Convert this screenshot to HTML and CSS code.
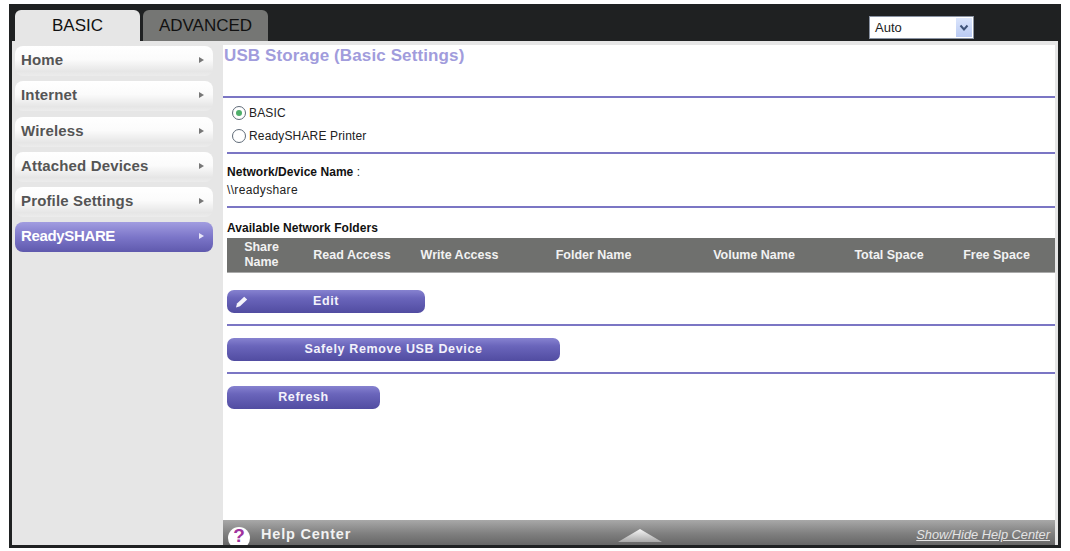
FILE: index.html
```html
<!DOCTYPE html>
<html lang="en">
<head>
<meta charset="utf-8">
<title>USB Storage (Basic Settings)</title>
<link rel="stylesheet" href="styles.css">
</head>
<body>
<div class="frame">
  <header class="top">
    <div class="tab tab-on">BASIC</div>
    <div class="tab tab-off">ADVANCED</div>
    <div class="select"><span class="select-text">Auto</span><span class="select-btn"><svg width="10" height="8" viewBox="0 0 10 8"><path d="M1.5 1.5 5 5.5l3.5-4" fill="none" stroke="#3f5378" stroke-width="2"/></svg></span></div>
  </header>
  <div class="panel">
    <nav class="side">
      <div class="item">Home<span class="arrow"></span></div>
      <div class="item">Internet<span class="arrow"></span></div>
      <div class="item">Wireless<span class="arrow"></span></div>
      <div class="item">Attached Devices<span class="arrow"></span></div>
      <div class="item">Profile Settings<span class="arrow"></span></div>
      <div class="item item-on">ReadySHARE<span class="arrow"></span></div>
    </nav>
    <main class="main">
      <div class="body">
        <h1 class="title">USB Storage (Basic Settings)</h1>
        <div class="rule rule-first"></div>
        <div class="radios">
          <div class="radio-row"><span class="radio radio-on"></span>BASIC</div>
          <div class="radio-row"><span class="radio"></span>ReadySHARE Printer</div>
        </div>
        <div class="rule"></div>
        <div class="name-block">
          <div><b class="tight">Network/Device Name</b> :</div>
          <div class="path">\\readyshare</div>
        </div>
        <div class="rule"></div>
        <div class="folders-title tight">Available Network Folders</div>
        <div class="thead">
          <span>Share<br>Name</span>
          <span>Read Access</span>
          <span>Write Access</span>
          <span>Folder Name</span>
          <span>Volume Name</span>
          <span>Total Space</span>
          <span>Free Space</span>
        </div>
        <div class="btn btn-edit"><svg class="pencil" width="13" height="12" viewBox="0 0 13 12"><path d="M9.2.8 12.2 3.4 5 10.2 1 11.4 2 7.4Z" fill="#f4f3fb"/></svg>Edit</div>
        <div class="rule rule-btn"></div>
        <div class="btn btn-safe">Safely Remove USB Device</div>
        <div class="rule rule-btn"></div>
        <div class="btn btn-refresh">Refresh</div>
      </div>
      <footer class="help">
        <span class="help-icon">?</span>
        <span class="help-text">Help Center</span>
        <svg class="help-tri" width="44" height="13" viewBox="0 0 44 13"><defs><linearGradient id="tri" x1="0" y1="0" x2="0" y2="1"><stop offset="0" stop-color="#f6f6f6"/><stop offset="1" stop-color="#a9a9a9"/></linearGradient></defs><path d="M22 0 44 13H0Z" fill="url(#tri)"/></svg>
        <a class="help-link">Show/Hide Help Center</a>
      </footer>
    </main>
  </div>
</div>
</body>
</html>
```
FILE: styles.css
```css
* { box-sizing: border-box; }
html, body { margin: 0; height: 100%; background: #fff; }
body {
  padding: 4px 9px 3px 9px;
  font-family: "Liberation Sans", Arial, sans-serif;
  overflow: hidden;
}
.frame {
  height: 544px;
  background: #1f2122;
  display: flex;
  flex-direction: column;
  padding: 0 3px 3px 3px;
}
.top {
  height: 37px;
  flex: none;
  display: flex;
  align-items: flex-end;
  padding-left: 3px;
  position: relative;
}
.tab {
  width: 125px;
  height: 31px;
  border-radius: 6px 6px 0 0;
  font-size: 17px;
  line-height: 31px;
  text-align: center;
  color: #111;
}
.tab-on { background: #e6e6e6; margin-right: 3px; }
.tab-off { background: #757674; }
.select {
  position: absolute;
  right: 84px;
  top: 12px;
  width: 105px;
  height: 23px;
  background: #fff;
  border: 1px solid #8a93a3;
  display: flex;
  justify-content: space-between;
  font-size: 13px;
  line-height: 21px;
  color: #222;
}
.select-text { padding-left: 5px; }
.select-btn {
  width: 16px;
  margin: 1px;
  background: linear-gradient(#dbe5fb, #b9caf3);
  display: flex;
  align-items: center;
  justify-content: center;
}
.panel {
  flex: 1;
  display: flex;
  background: #e6e6e6;
  padding: 4px 3px 0 3px;
  min-height: 0;
}
.side {
  width: 208px;
  flex: none;
  padding-top: 1px;
  display: flex;
  flex-direction: column;
  gap: 5.3px;
}
.item {
  width: 198px;
  height: 30px;
  border-radius: 8px;
  background: linear-gradient(#fff 0%, #fbfbfb 45%, #e6e6e6 85%, #ececec 100%);
  color: #555;
  font-size: 15px;
  font-weight: bold;
  letter-spacing: .15px;
  line-height: 28px;
  padding-left: 6px;
  position: relative;
}
.item-on {
  background: linear-gradient(#a29de0 0%, #7c76c9 50%, #5f59ad 100%);
  color: #fff;
  letter-spacing: -.35px;
}
.arrow {
  position: absolute;
  right: 9px;
  top: 11px;
  border-left: 5px solid #777;
  border-top: 3.5px solid transparent;
  border-bottom: 3.5px solid transparent;
}
.item-on .arrow { border-left-color: #e8e6f8; }
.main {
  flex: 1;
  min-width: 0;
  background: #fff;
  display: flex;
  flex-direction: column;
}
.body { flex: 1; padding: 0 0 0 4px; }
.title {
  margin: 0 0 0 -3px;
  height: 51px;
  font-size: 17px;
  font-weight: bold;
  letter-spacing: .12px;
  line-height: 22px;
  color: #a19cdc;
}
.rule { height: 2px; background: #7b76c4; }
.rule-first { margin-left: -4px; }
.radios { height: 54px; padding: 3px 0 0 5px; font-size: 12px; color: #222; }
.radio-row { height: 23px; display: flex; align-items: center; letter-spacing: .15px; }
.radio {
  width: 14px;
  height: 14px;
  margin-right: 3px;
  border-radius: 50%;
  border: 1px solid #5f6b78;
  background: #fff;
  display: flex;
  align-items: center;
  justify-content: center;
}
.radio-on::after {
  content: "";
  width: 6px;
  height: 6px;
  border-radius: 50%;
  background: #4fae6a;
}
.name-block { height: 52px; padding-top: 9px; font-size: 12px; line-height: 18px; color: #222; }
.tight { font-weight: bold; font-size: 12px; letter-spacing: .05px; color: #111; }
.path { letter-spacing: .35px; }
.folders-title { height: 30px; padding-top: 12px; line-height: 16px; }
.thead {
  height: 35px;
  background: #6f706e;
  border-bottom: 1px solid #aaa;
  color: #f2f2f2;
  font-size: 12.5px;
  font-weight: bold;
  line-height: 15px;
  display: grid;
  grid-template-columns: 69px 112px 103px 165px 156px 114px 101px 1fr;
  align-items: center;
  text-align: center;
}
.btn {
  height: 23px;
  border-radius: 7px;
  background: linear-gradient(#8682d0 0%, #6a65bb 35%, #514ca1 100%);
  color: #f3f2fb;
  font-size: 12.5px;
  font-weight: bold;
  letter-spacing: .55px;
  line-height: 22px;
  text-align: center;
  position: relative;
}
.btn-edit { width: 198px; margin-top: 17px; }
.pencil { position: absolute; left: 8px; top: 6px; }
.btn-safe { width: 333px; margin-top: 12px; letter-spacing: .65px; }
.btn-refresh { width: 153px; margin-top: 12px; }
.rule-btn { margin-top: 11px; }
.help {
  height: 25px;
  flex: none;
  background: linear-gradient(#a8a8a8 0%, #7f7f7f 55%, #666 100%);
  display: flex;
  align-items: flex-end;
  position: relative;
  color: #f2f2f2;
  overflow: hidden;
}
.help-icon {
  width: 22px;
  height: 22px;
  margin: 0 0 -4px 5px;
  border-radius: 50%;
  background: #fff;
  color: #a0329e;
  font-size: 19px;
  font-weight: bold;
  line-height: 18px;
  text-align: center;
}
.help-text {
  margin-left: 11px;
  font-size: 14.5px;
  font-weight: bold;
  letter-spacing: .8px;
  line-height: 22px;
}
.help-tri { position: absolute; left: 395px; bottom: 3px; }
.help-link {
  margin-left: auto;
  margin-right: 5px;
  font-size: 12.8px;
  font-style: italic;
  letter-spacing: 0;
  line-height: 20px;
  color: #e4e4e4;
  text-decoration: underline;
}
```
